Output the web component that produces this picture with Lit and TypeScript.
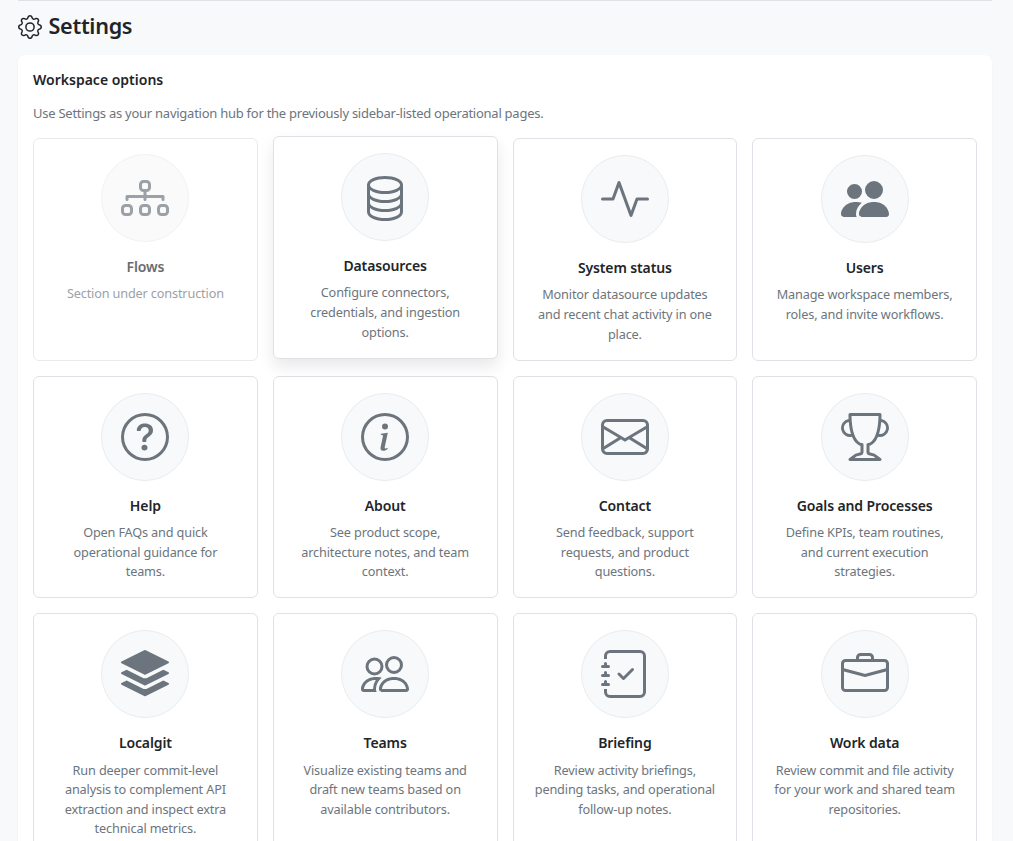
import { LitElement, html, css, svg } from "lit";
import { customElement } from "lit/decorators.js";

const icons: Record<string, any> = {
  flows: svg`<path fill-rule="evenodd" d="M6 3.5A1.5 1.5 0 0 1 7.5 2h1A1.5 1.5 0 0 1 10 3.5v1A1.5 1.5 0 0 1 8.5 6v1H14a.5.5 0 0 1 .5.5v1a.5.5 0 0 1-1 0V8h-5v.5a.5.5 0 0 1-1 0V8h-5v.5a.5.5 0 0 1-1 0v-1A.5.5 0 0 1 2 7h5.5V6A1.5 1.5 0 0 1 6 4.5v-1zM8.5 5a.5.5 0 0 0 .5-.5v-1a.5.5 0 0 0-.5-.5h-1a.5.5 0 0 0-.5.5v1a.5.5 0 0 0 .5.5h1zM0 11.5A1.5 1.5 0 0 1 1.5 10h1A1.5 1.5 0 0 1 4 11.5v1A1.5 1.5 0 0 1 2.5 14h-1A1.5 1.5 0 0 1 0 12.5v-1zm1.5-.5a.5.5 0 0 0-.5.5v1a.5.5 0 0 0 .5.5h1a.5.5 0 0 0 .5-.5v-1a.5.5 0 0 0-.5-.5h-1zm4.5.5A1.5 1.5 0 0 1 7.5 10h1a1.5 1.5 0 0 1 1.5 1.5v1A1.5 1.5 0 0 1 8.5 14h-1A1.5 1.5 0 0 1 6 12.5v-1zm1.5-.5a.5.5 0 0 0-.5.5v1a.5.5 0 0 0 .5.5h1a.5.5 0 0 0 .5-.5v-1a.5.5 0 0 0-.5-.5h-1zm4.5.5a1.5 1.5 0 0 1 1.5-1.5h1a1.5 1.5 0 0 1 1.5 1.5v1a1.5 1.5 0 0 1-1.5 1.5h-1a1.5 1.5 0 0 1-1.5-1.5v-1zm1.5-.5a.5.5 0 0 0-.5.5v1a.5.5 0 0 0 .5.5h1a.5.5 0 0 0 .5-.5v-1a.5.5 0 0 0-.5-.5h-1z"/>`,
  database: svg`<path d="M4.318 2.687C5.234 2.271 6.536 2 8 2s2.766.27 3.682.687C12.644 3.125 13 3.627 13 4c0 .374-.356.875-1.318 1.313C10.766 5.729 9.464 6 8 6s-2.766-.27-3.682-.687C3.356 4.875 3 4.373 3 4c0-.374.356-.875 1.318-1.313ZM13 5.698V7c0 .374-.356.875-1.318 1.313C10.766 8.729 9.464 9 8 9s-2.766-.27-3.682-.687C3.356 7.875 3 7.373 3 7V5.698c.271.202.58.378.904.525C4.978 6.711 6.427 7 8 7s3.022-.289 4.096-.777A4.92 4.92 0 0 0 13 5.698ZM14 4c0-1.007-.875-1.755-1.904-2.223C11.022 1.289 9.573 1 8 1s-3.022.289-4.096.777C2.875 2.245 2 2.993 2 4v9c0 1.007.875 1.755 1.904 2.223C4.978 15.71 6.427 16 8 16s3.022-.289 4.096-.777C13.125 14.755 14 14.007 14 13V4Zm-1 4.698V10c0 .374-.356.875-1.318 1.313C10.766 11.729 9.464 12 8 12s-2.766-.27-3.682-.687C3.356 10.875 3 10.373 3 10V8.698c.271.202.58.378.904.525C4.978 9.71 6.427 10 8 10s3.022-.289 4.096-.777A4.92 4.92 0 0 0 13 8.698Zm0 3V13c0 .374-.356.875-1.318 1.313C10.766 14.729 9.464 15 8 15s-2.766-.27-3.682-.687C3.356 13.875 3 13.373 3 13v-1.302c.271.202.58.378.904.525C4.978 12.71 6.427 13 8 13s3.022-.289 4.096-.777c.324-.147.633-.323.904-.525Z"/>`,
  activity: svg`<path fill-rule="evenodd" d="M6 2a.5.5 0 0 1 .47.33L10 12.036l1.53-4.208A.5.5 0 0 1 12 7.5h3.5a.5.5 0 0 1 0 1h-3.15l-1.88 5.17a.5.5 0 0 1-.94 0L6 3.964 4.47 8.171A.5.5 0 0 1 4 8.5H.5a.5.5 0 0 1 0-1h3.15l1.88-5.17A.5.5 0 0 1 6 2Z"/>`,
  peopleFill: svg`<path d="M7 14s-1 0-1-1 1-4 5-4 5 3 5 4-1 1-1 1H7Zm4-6a3 3 0 1 0 0-6 3 3 0 0 0 0 6Zm-5.784 6A2.238 2.238 0 0 1 5 13c0-1.355.68-2.75 1.936-3.72A6.325 6.325 0 0 0 5 9c-4 0-5 3-5 4s1 1 1 1h4.216ZM4.5 8a2.5 2.5 0 1 0 0-5 2.5 2.5 0 0 0 0 5Z"/>`,
  question: svg`<path d="M8 15A7 7 0 1 1 8 1a7 7 0 0 1 0 14zm0 1A8 8 0 1 0 8 0a8 8 0 0 0 0 16z"/><path d="M5.255 5.786a.237.237 0 0 0 .241.247h.825c.138 0 .248-.113.266-.25.09-.656.54-1.134 1.342-1.134.686 0 1.314.343 1.314 1.168 0 .635-.374.927-.965 1.371-.673.489-1.206 1.06-1.168 1.987l.003.217a.25.25 0 0 0 .25.246h.811a.25.25 0 0 0 .25-.25v-.105c0-.718.273-.927 1.01-1.486.609-.463 1.244-.977 1.244-2.056 0-1.511-1.276-2.241-2.673-2.241-1.267 0-2.655.59-2.75 2.286zm1.557 5.763c0 .533.425.927 1.01.927.609 0 1.028-.394 1.028-.927 0-.552-.42-.94-1.029-.94-.584 0-1.009.388-1.009.94z"/>`,
  info: svg`<path d="M8 15A7 7 0 1 1 8 1a7 7 0 0 1 0 14zm0 1A8 8 0 1 0 8 0a8 8 0 0 0 0 16z"/><path d="m8.93 6.588-2.29.287-.082.38.45.083c.294.07.352.176.288.469l-.738 3.468c-.194.897.105 1.319.808 1.319.545 0 1.178-.252 1.465-.598l.088-.416c-.2.176-.492.246-.686.246-.275 0-.375-.193-.304-.533L8.93 6.588zM9 4.5a1 1 0 1 1-2 0 1 1 0 0 1 2 0z"/>`,
  envelope: svg`<path d="M0 4a2 2 0 0 1 2-2h12a2 2 0 0 1 2 2v8a2 2 0 0 1-2 2H2a2 2 0 0 1-2-2V4Zm2-1a1 1 0 0 0-1 1v.217l7 4.2 7-4.2V4a1 1 0 0 0-1-1H2Zm13 2.383-4.708 2.825L15 11.105V5.383Zm-.034 6.876-5.64-3.471L8 9.583l-1.326-.795-5.64 3.47A1 1 0 0 0 2 13h12a1 1 0 0 0 .966-.741ZM1 11.105l4.708-2.897L1 5.383v5.722Z"/>`,
  trophy: svg`<path d="M2.5.5A.5.5 0 0 1 3 0h10a.5.5 0 0 1 .5.5c0 .538-.012 1.05-.034 1.536a3 3 0 1 1-1.133 5.89c-.79 1.865-1.878 2.777-2.833 3.011v2.173l1.425.356c.194.048.377.135.537.255L13.3 15.1a.5.5 0 0 1-.3.9H3a.5.5 0 0 1-.3-.9l1.838-1.379c.16-.12.343-.207.537-.255L6.5 13.11v-2.173c-.955-.234-2.043-1.146-2.833-3.012a3 3 0 1 1-1.132-5.89A33.076 33.076 0 0 1 2.5.5zm.099 2.54a2 2 0 0 0 .72 3.935c-.333-1.05-.588-2.346-.72-3.935zm10.083 3.935a2 2 0 0 0 .72-3.935c-.133 1.59-.388 2.885-.72 3.935zM3.504 1c.007.517.026 1.006.056 1.469.13 2.028.457 3.546.87 4.667C5.294 9.48 6.484 10 7 10a.5.5 0 0 1 .5.5v2.61a1 1 0 0 1-.757.97l-1.426.356a.5.5 0 0 0-.179.085L4.5 15h7l-.638-.479a.501.501 0 0 0-.18-.085l-1.425-.356a1 1 0 0 1-.757-.97V10.5A.5.5 0 0 1 9 10c.516 0 1.706-.52 2.57-2.864.413-1.12.74-2.64.87-4.667.03-.463.049-.952.056-1.469H3.504z"/>`,
  stack: svg`<path d="m14.12 10.163 1.715.858c.22.11.22.424 0 .534L8.267 15.34a.598.598 0 0 1-.534 0L.165 11.555a.299.299 0 0 1 0-.534l1.716-.858 5.317 2.659c.505.252 1.1.252 1.604 0l5.317-2.66zM7.733.063a.598.598 0 0 1 .534 0l7.568 3.784a.3.3 0 0 1 0 .535L8.267 8.165a.598.598 0 0 1-.534 0L.165 4.382a.299.299 0 0 1 0-.535L7.733.063z"/><path d="m14.12 6.576 1.715.858c.22.11.22.424 0 .534l-7.568 3.784a.598.598 0 0 1-.534 0L.165 7.968a.299.299 0 0 1 0-.534l1.716-.858 5.317 2.659c.505.252 1.1.252 1.604 0l5.317-2.659z"/>`,
  people: svg`<path d="M15 14s1 0 1-1-1-4-5-4-5 3-5 4 1 1 1 1h8Zm-7.978-1A.261.261 0 0 1 7 12.996c.001-.264.167-1.03.76-1.72C8.312 10.629 9.282 10 11 10c1.717 0 2.687.63 3.24 1.276.593.69.758 1.457.76 1.72l-.008.002a.274.274 0 0 1-.014.002H7.022ZM11 7a2 2 0 1 0 0-4 2 2 0 0 0 0 4Zm3-2a3 3 0 1 1-6 0 3 3 0 0 1 6 0ZM6.936 9.28a5.88 5.88 0 0 0-1.23-.247A7.35 7.35 0 0 0 5 9c-4 0-5 3-5 4 0 .667.333 1 1 1h4.216A2.238 2.238 0 0 1 5 13c0-1.01.377-2.042 1.09-2.904.243-.294.526-.569.846-.816ZM4.92 10A5.493 5.493 0 0 0 4 13H1c0-.26.164-1.03.76-1.724.545-.636 1.492-1.256 3.16-1.275ZM1.5 5.5a3 3 0 1 1 6 0 3 3 0 0 1-6 0Zm3-2a2 2 0 1 0 0 4 2 2 0 0 0 0-4Z"/>`,
  journal: svg`<path fill-rule="evenodd" d="M10.854 6.146a.5.5 0 0 1 0 .708l-3 3a.5.5 0 0 1-.708 0l-1.5-1.5a.5.5 0 1 1 .708-.708L7.5 8.793l2.646-2.647a.5.5 0 0 1 .708 0z"/><path d="M3 0h10a2 2 0 0 1 2 2v12a2 2 0 0 1-2 2H3a2 2 0 0 1-2-2v-1h1v1a1 1 0 0 0 1 1h10a1 1 0 0 0 1-1V2a1 1 0 0 0-1-1H3a1 1 0 0 0-1 1v1H1V2a2 2 0 0 1 2-2z"/><path d="M1 5v-.5a.5.5 0 0 1 1 0V5h.5a.5.5 0 0 1 0 1h-2a.5.5 0 0 1 0-1H1zm0 3v-.5a.5.5 0 0 1 1 0V8h.5a.5.5 0 0 1 0 1h-2a.5.5 0 0 1 0-1H1zm0 3v-.5a.5.5 0 0 1 1 0v.5h.5a.5.5 0 0 1 0 1h-2a.5.5 0 0 1 0-1H1z"/>`,
  briefcase: svg`<path d="M6.5 1A1.5 1.5 0 0 0 5 2.5V3H1.5A1.5 1.5 0 0 0 0 4.5v8A1.5 1.5 0 0 0 1.5 14h13a1.5 1.5 0 0 0 1.5-1.5v-8A1.5 1.5 0 0 0 14.5 3H11v-.5A1.5 1.5 0 0 0 9.5 1h-3zm0 1h3a.5.5 0 0 1 .5.5V3H6v-.5a.5.5 0 0 1 .5-.5zm1.886 6.914L15 7.151V12.5a.5.5 0 0 1-.5.5h-13a.5.5 0 0 1-.5-.5V7.15l6.614 1.764a1.5 1.5 0 0 0 .772 0zM1.5 4h13a.5.5 0 0 1 .5.5v1.616L8.129 7.948a.5.5 0 0 1-.258 0L1 6.116V4.5a.5.5 0 0 1 .5-.5z"/>`,
  gear: svg`<path d="M8 4.754a3.246 3.246 0 1 0 0 6.492 3.246 3.246 0 0 0 0-6.492zM5.754 8a2.246 2.246 0 1 1 4.492 0 2.246 2.246 0 0 1-4.492 0z"/><path d="M9.796 1.343c-.527-1.79-3.065-1.79-3.592 0l-.094.319a.873.873 0 0 1-1.255.52l-.292-.16c-1.64-.892-3.433.902-2.54 2.541l.159.292a.873.873 0 0 1-.52 1.255l-.319.094c-1.79.527-1.79 3.065 0 3.592l.319.094a.873.873 0 0 1 .52 1.255l-.16.292c-.892 1.64.901 3.434 2.541 2.54l.292-.159a.873.873 0 0 1 1.255.52l.094.319c.527 1.79 3.065 1.79 3.592 0l.094-.319a.873.873 0 0 1 1.255-.52l.292.16c1.64.893 3.434-.902 2.54-2.541l-.159-.292a.873.873 0 0 1 .52-1.255l.319-.094c1.79-.527 1.79-3.065 0-3.592l-.319-.094a.873.873 0 0 1-.52-1.255l.16-.292c.893-1.64-.902-3.433-2.541-2.54l-.292.159a.873.873 0 0 1-1.255-.52l-.094-.319zm-2.633.283c.246-.835 1.428-.835 1.674 0l.094.319a1.873 1.873 0 0 0 2.693 1.115l.291-.16c.764-.415 1.6.42 1.184 1.185l-.159.292a1.873 1.873 0 0 0 1.116 2.692l.318.094c.835.246.835 1.428 0 1.674l-.319.094a1.873 1.873 0 0 0-1.115 2.693l.16.291c.415.764-.42 1.6-1.185 1.184l-.291-.159a1.873 1.873 0 0 0-2.693 1.116l-.094.318c-.246.835-1.428.835-1.674 0l-.094-.319a1.873 1.873 0 0 0-2.692-1.115l-.292.16c-.764.415-1.6-.42-1.184-1.185l.159-.291A1.873 1.873 0 0 0 1.945 8.93l-.319-.094c-.835-.246-.835-1.428 0-1.674l.319-.094A1.873 1.873 0 0 0 3.06 4.377l-.16-.292c-.415-.764.42-1.6 1.185-1.184l.292.159a1.873 1.873 0 0 0 2.692-1.115l.094-.319z"/>`,
};

const cards = [
  { icon: "flows", title: "Flows", desc: "Section under construction", disabled: true },
  { icon: "database", title: "Datasources", desc: "Configure connectors, credentials, and ingestion options.", hover: true },
  { icon: "activity", title: "System status", desc: "Monitor datasource updates and recent chat activity in one place." },
  { icon: "peopleFill", title: "Users", desc: "Manage workspace members, roles, and invite workflows." },
  { icon: "question", title: "Help", desc: "Open FAQs and quick operational guidance for teams." },
  { icon: "info", title: "About", desc: "See product scope, architecture notes, and team context." },
  { icon: "envelope", title: "Contact", desc: "Send feedback, support requests, and product questions." },
  { icon: "trophy", title: "Goals and Processes", desc: "Define KPIs, team routines, and current execution strategies." },
  { icon: "stack", title: "Localgit", desc: "Run deeper commit-level analysis to complement API extraction and inspect extra technical metrics." },
  { icon: "people", title: "Teams", desc: "Visualize existing teams and draft new teams based on available contributors." },
  { icon: "journal", title: "Briefing", desc: "Review activity briefings, pending tasks, and operational follow-up notes." },
  { icon: "briefcase", title: "Work data", desc: "Review commit and file activity for your work and shared team repositories." },
];

@customElement("app-root")
export class AppRoot extends LitElement {
  static styles = css`
    :host {
      display: block;
      height: 841px;
      overflow: hidden;
      box-sizing: border-box;
      padding: 0 21px 0 18px;
      background: #f8f9fa;
      font-family: "Noto Sans", "Open Sans", sans-serif;
      color: #212529;
    }
    .rule { height: 1px; background: #dee2e6; }
    .head { display: flex; align-items: center; gap: 7px; height: 54px; box-sizing: border-box; padding-bottom: 3px; }
    .gear { width: 24px; height: 24px; fill: #212529; flex: none; margin-left: -0.5px; }
    h1 { margin: 0 0 2px; font-size: 21.6px; line-height: 32px; font-weight: 600; letter-spacing: -0.3px; }
    .panel {
      background: #fff;
      border-radius: 8px;
      padding: 15px 15px 16px;
      box-shadow: 0 1px 2px rgba(0, 0, 0, 0.05);
    }
    h2 { margin: 0; font-size: 14px; line-height: 20px; font-weight: 600; }
    .lead { margin: 13px 0 15px; font-size: 13px; line-height: 20px; color: #6c757d; letter-spacing: -0.256px; }
    .grid { display: grid; grid-template-columns: repeat(4, minmax(0, 1fr)); gap: 15px; }
    .card {
      box-sizing: border-box;
      background: #fff;
      border: 1px solid #dee2e6;
      border-radius: 6px;
      padding: 16px 20px 15.4px;
      display: flex;
      flex-direction: column;
      align-items: center;
      text-align: center;
    }
    .card.hover { transform: translateY(-2px); box-shadow: 0 8px 16px rgba(0, 0, 0, 0.09); }
    .card.disabled { opacity: 0.68; padding-top: 15px; }
    .circle {
      width: 88px;
      height: 88px;
      box-sizing: border-box;
      border-radius: 50%;
      background: #f8f9fa;
      border: 1px solid #e9ecef;
      display: flex;
      align-items: center;
      justify-content: center;
      margin-bottom: 14px;
    }
    .circle svg { width: 48px; height: 48px; fill: #6c757d; }
    h3 { margin: 0 0 6.4px; font-size: 14px; line-height: 22px; font-weight: 600; letter-spacing: -0.12px; }
    p { margin: 0; }
    .desc { font-size: 12.7px; line-height: 19.6px; color: #6c757d; letter-spacing: -0.15px; }
  `;

  render() {
    return html`
      <div class="rule"></div>
      <header class="head">
        <svg class="gear" viewBox="0 0 16 16">${icons.gear}</svg>
        <h1>Settings</h1>
      </header>
      <section class="panel">
        <h2>Workspace options</h2>
        <p class="lead">Use Settings as your navigation hub for the previously sidebar-listed operational pages.</p>
        <div class="grid">
          ${cards.map(
            (c) => html`
              <article class="card ${c.hover ? "hover" : ""} ${c.disabled ? "disabled" : ""}">
                <div class="circle"><svg viewBox="0 0 16 16">${icons[c.icon]}</svg></div>
                <h3>${c.title}</h3>
                <p class="desc">${c.desc}</p>
              </article>
            `
          )}
        </div>
      </section>
    `;
  }
}
